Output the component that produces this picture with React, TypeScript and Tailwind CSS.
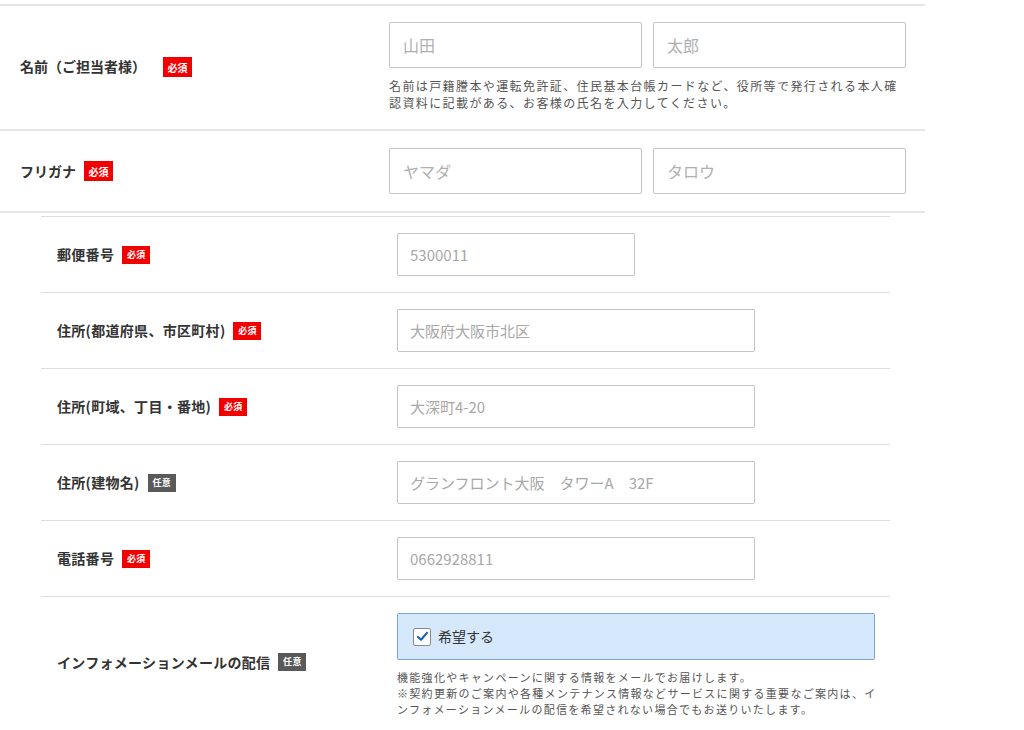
const font = "font-['Noto_Sans_CJK_JP','Noto_Sans',sans-serif]";

function Badge({ required, small }: { required?: boolean; small?: boolean }) {
  return (
    <span
      className={`ml-[8px] inline-flex items-center justify-center font-bold text-white ${
        required ? 'bg-[#f20000]' : 'bg-[#5a5a5a]'
      } ${small ? 'h-[18px] w-[28px] text-[9px]' : 'h-[20px] w-[29px] text-[10px]'}`}
    >
      {required ? '必須' : '任意'}
    </span>
  );
}

function BigInput({ placeholder }: { placeholder: string }) {
  return (
    <input
      placeholder={placeholder}
      className="h-[46px] w-[253px] rounded-[2px] border border-[#c4c4c4] bg-white px-[13px] text-[16px] text-[#333] placeholder:text-[#b0b0b0] outline-none"
    />
  );
}

function SmallInput({ placeholder, w }: { placeholder: string; w: string }) {
  return (
    <input
      placeholder={placeholder}
      className={`h-[43px] ${w} rounded-[2px] border border-[#c4c4c4] bg-white px-[12px] text-[15px] text-[#333] placeholder:text-[#a8a8a8] outline-none`}
    />
  );
}

function Row({ label, required, children }: { label: string; required?: boolean; children: React.ReactNode }) {
  return (
    <div className="flex h-[76px] items-center border-b border-[#dedede]">
      <div className="flex w-[356px] items-center pl-[16px] text-[14px] font-bold tracking-[0.3px] text-[#333]">
        {label}
        <Badge required={required} small />
      </div>
      {children}
    </div>
  );
}

export default function App() {
  return (
    <div className={`${font} relative h-[730px] w-[1024px] overflow-hidden bg-white pt-[4px]`}>
      {/* top block */}
      <div className="w-[925px] border-t-2 border-[#e6e6e6]">
        <div className="flex border-b-2 border-[#e6e6e6] pb-[18px] pt-[16px]">
          <div className="flex w-[389px] items-center pl-[20px] text-[14px] font-bold text-[#333]">
            名前（ご担当者様）
            <span className="ml-[9px]">
              <Badge required />
            </span>
          </div>
          <div>
            <div className="flex gap-[11px]">
              <BigInput placeholder="山田" />
              <BigInput placeholder="太郎" />
            </div>
            <p className="mt-[9px] text-[12px] leading-[17px] tracking-[1.4px] text-[#555]">
              名前は戸籍謄本や運転免許証、住民基本台帳カードなど、役所等で発行される本人確
              <br />
              認資料に記載がある、お客様の氏名を入力してください。
            </p>
          </div>
        </div>
        <div className="flex border-b-2 border-[#e6e6e6] py-[17px]">
          <div className="flex w-[389px] items-center pl-[20px] text-[14px] font-bold text-[#333]">
            フリガナ
            <Badge required />
          </div>
          <div className="flex gap-[11px]">
            <BigInput placeholder="ヤマダ" />
            <BigInput placeholder="タロウ" />
          </div>
        </div>
      </div>

      {/* address block */}
      <div className="ml-[41px] mt-[3px] w-[849px] border-t border-[#dedede]">
        <Row label="郵便番号" required>
          <SmallInput placeholder="5300011" w="w-[238px]" />
        </Row>
        <Row label="住所(都道府県、市区町村)" required>
          <SmallInput placeholder="大阪府大阪市北区" w="w-[358px]" />
        </Row>
        <Row label="住所(町域、丁目・番地)" required>
          <SmallInput placeholder="大深町4-20" w="w-[358px]" />
        </Row>
        <Row label="住所(建物名)">
          <SmallInput placeholder="グランフロント大阪　タワーA　32F" w="w-[358px]" />
        </Row>
        <Row label="電話番号" required>
          <SmallInput placeholder="0662928811" w="w-[358px]" />
        </Row>
        <div className="flex pt-[16px]">
          <div className="flex w-[356px] items-center pl-[16px] pb-[6px] text-[14px] font-bold tracking-[0.3px] text-[#333]">
            インフォメーションメールの配信
            <Badge small />
          </div>
          <div>
            <label className="flex h-[47px] w-[478px] items-center rounded-[2px] border border-[#7ba4d4] bg-[#d6e9fc] pl-[15px]">
              <span className="flex h-[18px] w-[18px] items-center justify-center rounded-[2px] border border-[#8a8a8a] bg-white">
                <svg viewBox="0 0 16 16" className="h-[13px] w-[13px]">
                  <path d="M2.5 8.5 L6.2 12 L13.5 3.5" fill="none" stroke="#1a5fb4" strokeWidth="2.6" strokeLinecap="round" strokeLinejoin="round" />
                </svg>
              </span>
              <span className="ml-[7px] text-[14px] text-[#333]">希望する</span>
            </label>
            <p className="mt-[9px] text-[11px] leading-[16px] tracking-[1.3px] text-[#555]">
              機能強化やキャンペーンに関する情報をメールでお届けします。
              <br />
              ※契約更新のご案内や各種メンテナンス情報などサービスに関する重要なご案内は、イ
              <br />
              ンフォメーションメールの配信を希望されない場合でもお送りいたします。
            </p>
          </div>
        </div>
      </div>
    </div>
  );
}
